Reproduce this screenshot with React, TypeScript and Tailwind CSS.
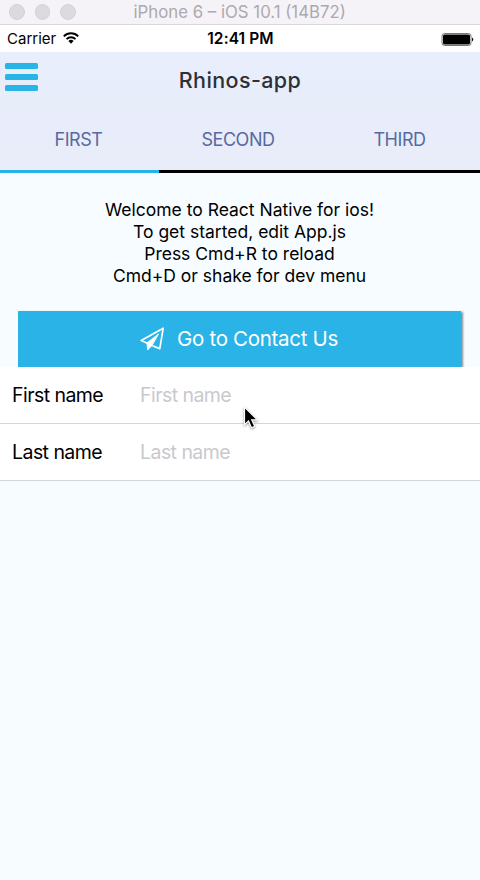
import React from "react";

function TitleBar() {
  return (
    <div className="flex h-[25px] items-center border-b border-[#d9d6d9] bg-[#f5f3f7]">
      <div className="flex w-[133.5px] shrink-0 gap-[10px] pl-[9px]">
        {[0, 1, 2].map((i) => (
          <span key={i} className="size-[15.5px] rounded-full border border-[#d4d1d4] bg-[#dcdadc]" />
        ))}
      </div>
      <span className="whitespace-nowrap text-[16.8px] leading-[24px] text-[#acaaad]">iPhone 6 – iOS 10.1 (14B72)</span>
    </div>
  );
}

function StatusBar() {
  return (
    <div className="grid h-[27px] grid-cols-3 items-center bg-white pt-px text-black">
      <div className="flex items-center gap-[7px] pl-[7px] text-[15px]">
        <span>Carrier</span>
        <svg className="-mt-[2px] h-[12px] w-[16px]" viewBox="0 0 16 12" fill="none" stroke="#000" strokeWidth="1.9">
          <path d="M.8 4.3a10.2 10.2 0 0 1 14.4 0M3.5 7.1a6.4 6.4 0 0 1 9 0" />
          <path d="M5.4 9a3.7 3.7 0 0 1 5.2 0L8 11.7z" fill="#000" stroke="none" />
        </svg>
      </div>
      <span className="whitespace-nowrap pl-px text-center text-[15.5px] font-semibold tracking-[0.1px]">12:41 PM</span>
      <svg className="mr-[6px] h-[13px] w-[33px] justify-self-end" viewBox="0 0 33 13">
        <rect x="1" y=".5" width="29" height="12" rx="2.5" fill="#fff" stroke="#777" />
        <rect x="2" y="1.5" width="27" height="10" rx="1.5" fill="#000" />
        <path d="M31 4.5q2.6 2 0 4z" fill="#000" />
      </svg>
    </div>
  );
}

function Header() {
  return (
    <header className="bg-linear-to-b from-[#e8eefc] to-[#e9ecf9]">
      <div className="grid h-[58px] grid-cols-[1fr_auto_1fr] items-center">
        <svg className="-mt-[8px] ml-[5px] h-[28px] w-[33px]" viewBox="0 0 33 28" fill="#29b4e6">
          <rect width="33" height="6" rx="1.5" />
          <rect y="11" width="33" height="6" rx="1.5" />
          <rect y="22" width="33" height="6" rx="1.5" />
        </svg>
        <h1 className="-mt-[2px] text-[21.5px] font-medium tracking-[0.4px] text-[#2e3036]">Rhinos-app</h1>
      </div>
      <nav className="grid h-[60px] grid-cols-[157px_162px_161px] items-center pb-[2px] text-center text-[18px] tracking-[-0.45px] text-[#566aa0]">
        <span>FIRST</span>
        <span>SECOND</span>
        <span>THIRD</span>
      </nav>
      <div className="flex h-[3px] bg-black">
        <div className="w-[159px] bg-[#24b2ea]" />
      </div>
    </header>
  );
}

function Field({ label }: { label: string }) {
  return (
    <label className="flex h-[57px] items-center border-b border-[#d6d5da] bg-white pt-[1px] pl-[12px] text-[19.5px] tracking-[-0.55px]">
      <span className="w-[128px] text-black">{label}</span>
      <span className="text-[#c9c8ce]">{label}</span>
    </label>
  );
}

export default function App() {
  return (
    <div className="relative h-[880px] w-[480px] overflow-hidden bg-[#f6fcff] font-['Inter','Liberation_Sans',sans-serif]">
      <TitleBar />
      <StatusBar />
      <Header />
      <p className="mt-[26px] mr-[1px] text-center text-[17.5px] leading-[22px] text-black">
        <span className="block">Welcome to React Native for ios!</span>
        <span className="block">To get started, edit App.js</span>
        <span className="block">Press Cmd+R to reload</span>
        <span className="block">Cmd+D or shake for dev menu</span>
      </p>
      <button className="mt-[24px] ml-[18px] flex h-[56px] w-[443px] items-center bg-[#29b3e6] pl-[122px] text-[20.5px] tracking-[-0.3px] text-white shadow-[2px_1px_2px_rgba(0,0,0,0.45)]">
        <svg className="mr-[12px] h-[24px] w-[25px]" viewBox="0 0 25 24" fill="none" stroke="#fff" strokeWidth="1.7" strokeLinejoin="round">
          <path d="M7.4 16.2 1.2 13.4 23.2 1.2 19.8 21.6l-7.4-2.9" />
          <path d="M18.5 7 7 15.8l.6 7.2 4.6-4.8z" fill="#fff" strokeWidth=".9" />
        </svg>
        <span>Go to Contact Us</span>
      </button>
      <form className="relative">
        <Field label="First name" />
        <Field label="Last name" />
      </form>
      <svg className="absolute top-[406px] left-[243px] h-[24px] w-[16px] drop-shadow-[0_1px_1px_rgba(0,0,0,0.4)]" viewBox="0 0 16 24">
        <path d="M1.5 1v17.6l4-3.7 3 6.8 3.2-1.4-3-6.5h5.6z" fill="#000" stroke="#fff" strokeWidth="1.2" />
      </svg>
    </div>
  );
}
